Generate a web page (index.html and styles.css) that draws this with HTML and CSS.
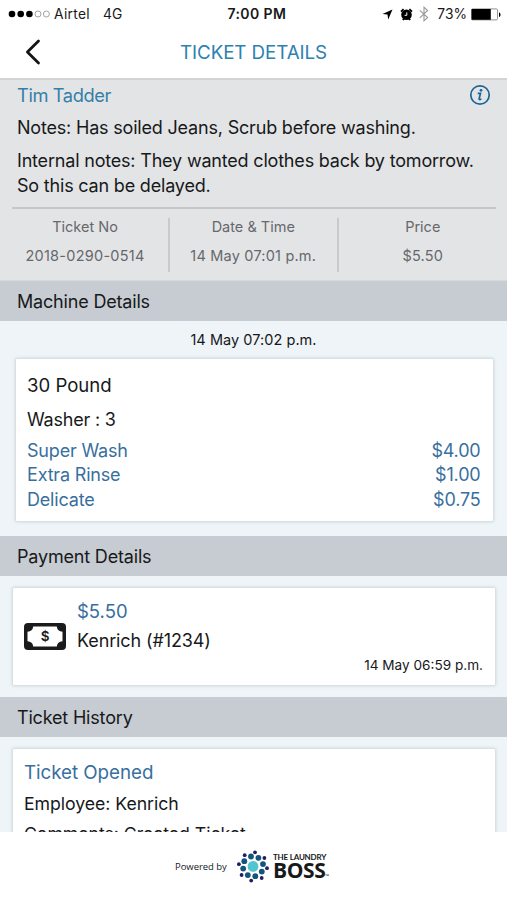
FILE: index.html
```html
<!DOCTYPE html>
<html lang="en">
<head>
<meta charset="utf-8">
<title>Ticket Details</title>
<link rel="stylesheet" href="styles.css">
</head>
<body>
<div class="phone">
  <div class="status">
    <div class="status-left">
      <svg class="signal" width="42" height="8" viewBox="0 0 42 8"><g fill="#000"><circle cx="4" cy="4" r="3.3"/><circle cx="12.7" cy="4" r="3.3"/><circle cx="21.4" cy="4" r="3.3"/></g><g fill="none" stroke="#999" stroke-width=".9"><circle cx="30" cy="4" r="3"/><circle cx="38.4" cy="4" r="3"/></g></svg>
      <span class="carrier">Airtel</span><span class="network">4G</span>
    </div>
    <span class="clock">7:00 PM</span>
    <div class="status-right">
      <svg class="loc" width="11" height="11" viewBox="0 0 11 11"><path d="M10.5.5 6.2 10.5 5.5 5.6.5 5z" fill="#000"/></svg>
      <svg class="alarm" width="13" height="13" viewBox="0 0 13 13"><circle cx="6.5" cy="6.8" r="5.3"/><path d="M1 3.6 3.6 1.2M12 3.6 9.4 1.2M2.9 12 4 10.6M10.1 12 9 10.6" stroke="#000" stroke-width="1.8"/><path d="M6.8 4.4v2.9H4.6" fill="none" stroke="#fff" stroke-width="1"/></svg>
      <svg class="bt" width="10" height="16" viewBox="0 0 10 16"><path d="m.8 4.3 7.8 7.2L5 14.8V1.2l3.6 3.3L.8 11.8" fill="none" stroke="#999" stroke-width="1.1"/></svg>
      <span class="percent">73%</span>
      <svg class="battery" width="30" height="13" viewBox="0 0 30 13"><rect x=".5" y=".9" width="26" height="11" rx="1.2" fill="#fff" stroke="#777" stroke-width=".8"/><path d="M.6 1h19.2v10.8H.6z"/><path d="M28 4.2c2 .7 2 4.1 0 4.8z"/></svg>
    </div>
  </div>
  <header class="nav">
    <svg class="back" width="16" height="26" viewBox="0 0 16 26"><path d="M13.5 2 2.4 13 13.5 24" fill="none" stroke="#151515" stroke-width="2.8" stroke-linecap="round" stroke-linejoin="round"/></svg>
    <h1 class="title">TICKET DETAILS</h1>
  </header>
  <main class="content">
    <section class="summary">
      <div class="customer">
        <span class="name">Tim Tadder</span>
        <svg class="info" width="22" height="22" viewBox="0 0 22 22"><circle cx="11" cy="11" r="9.2" fill="none" stroke="#1b6696" stroke-width="1.7"/><g fill="none" stroke="#1b6696" stroke-width="1.7"><path d="M8.7 9.3h2.8l-1.3 5.2q-.3 1.3 1 1l1.2-.5"/></g><circle cx="12" cy="6.3" r="1.4" fill="#1b6696"/></svg>
      </div>
      <p class="notes">Notes: Has soiled Jeans, Scrub before washing.</p>
      <p class="internal">Internal notes: They wanted clothes back by tomorrow.<br>So this can be delayed.</p>
      <div class="rule"></div>
      <div class="facts">
        <div class="fact"><span class="label">Ticket No</span><span class="value">2018-0290-0514</span></div>
        <div class="fact"><span class="label">Date &amp; Time</span><span class="value">14 May 07:01 p.m.</span></div>
        <div class="fact"><span class="label">Price</span><span class="value">$5.50</span></div>
      </div>
    </section>
    <h2 class="bar">Machine Details</h2>
    <div class="stamp">14 May 07:02 p.m.</div>
    <section class="card machine">
      <div class="size">30 Pound</div>
      <div class="washer">Washer : 3</div>
      <div class="option"><span>Super Wash</span><span>$4.00</span></div>
      <div class="option"><span>Extra Rinse</span><span>$1.00</span></div>
      <div class="option"><span>Delicate</span><span>$0.75</span></div>
    </section>
    <h2 class="bar">Payment Details</h2>
    <section class="card payment">
      <svg class="cash" width="42" height="27" viewBox="0 0 42 27"><rect width="42" height="27" rx="4" fill="#1b1b1b"/><path d="M9.2 3.5h23.6q.5 4.7 5.7 5.2v9.6q-5.2.5-5.7 5.2H9.2q-.5-4.7-5.7-5.2V8.7q5.2-.5 5.7-5.2z" fill="#fff"/><text class="dollar" x="21.2" y="18.4" text-anchor="middle">$</text></svg>
      <div class="pay-body">
        <div class="amount">$5.50</div>
        <div class="payer">Kenrich (#1234)</div>
        <div class="paid-at">14 May 06:59 p.m.</div>
      </div>
    </section>
    <h2 class="bar">Ticket History</h2>
    <section class="card history">
      <div class="event">Ticket Opened</div>
      <div class="line">Employee: Kenrich</div>
      <div class="line">Comments: Created Ticket</div>
    </section>
  </main>
  <footer class="footer">
    <span class="powered">Powered by</span>
    <svg class="logo" width="32" height="33" viewBox="0 0 32 33"><circle cx="16" cy="16.4" r="5.4" fill="#53c5cf"/><g fill="#14557f"><circle cx="14" cy="6.5" r="2.9"/><circle cx="21.4" cy="7.8" r="2.9"/><circle cx="26" cy="14.1" r="2.9"/><circle cx="24.8" cy="21.6" r="2.9"/><circle cx="18.3" cy="26.2" r="2.9"/><circle cx="10.8" cy="25.1" r="2.9"/><circle cx="6.2" cy="18.6" r="2.9"/><circle cx="7.3" cy="11.2" r="2.9"/></g><g fill="#211d60"><circle cx="18" cy="2.3" r="1.9"/><circle cx="27.4" cy="8" r="1.9"/><circle cx="30" cy="18.2" r="1.9"/><circle cx="24.7" cy="28" r="1.9"/><circle cx="14.2" cy="30.6" r="1.9"/><circle cx="4.6" cy="25" r="1.9"/><circle cx="1.9" cy="14.2" r="1.9"/><circle cx="7.7" cy="5.2" r="1.9"/></g></svg>
    <div class="wordmark"><span class="small">THE LAUNDRY</span><span class="big">BOSS<small>™</small></span></div>
  </footer>
</div>
</body>
</html>
```
FILE: styles.css
```css
* { box-sizing: border-box; }
body { margin: 0; background: #fff; font-family: Inter, "Liberation Sans", sans-serif; color: #17191b; }
h1, h2, p { margin: 0; font-weight: 400; }
svg { display: block; flex: none; }
.phone { width: 507px; height: 900px; display: flex; flex-direction: column; overflow: hidden; white-space: nowrap; }
.status { height: 28px; flex: none; display: grid; grid-template-columns: 219.5px 1fr auto; align-items: center; padding: 0 6px 0 8px; font-size: 13.8px; line-height: 28px; }
.status-left, .status-right { display: flex; align-items: center; }
.carrier { margin-left: 4px; font-size: 13.8px; letter-spacing: 0.3px; }
.network { margin-left: 13px; letter-spacing: 0.2px; }
.clock { font-weight: 600; font-size: 14px; letter-spacing: 0.4px; }
.alarm { margin-left: 7px; }
.bt { margin-left: 6px; }
.percent { margin: 0 4px 0 8px; }
.nav { height: 50px; flex: none; display: grid; grid-template-columns: 100px 1fr 100px; align-items: center; padding: 0; }
.back { margin: -3px 0 0 25px; }
.title { font-size: 18.8px; letter-spacing: -0.1px; line-height: 48px; text-align: center; color: #2d81ae; }
.content { height: 754px; flex: none; overflow: hidden; background: #eef4f8; }
.summary { height: 203px; background: #e3e4e6; border-top: 2px solid #d2d4d6; border-bottom: 1px solid #d5dadc; padding: 3px 11px 0 12px; }
.customer { display: flex; height: 24px; align-items: center; justify-content: space-between; padding: 0 5px; }
.name { font-size: 18.3px; letter-spacing: -0.4px; line-height: 24px; color: #347fa9; }
.notes, .internal { font-size: 18px; letter-spacing: -0.19px; line-height: 24.5px; padding-left: 5px; }
.notes { margin-top: 9px; }
.internal { margin-top: 8.5px; }
.rule { height: 2px; margin-top: 9px; background: #c5c7c9; }
.facts { display: grid; grid-template-columns: 168px 168.5px 1fr; margin: 9px -11px 0 -12px; }
.fact { height: 54px; display: flex; flex-direction: column; align-items: center; color: #66686b; font-size: 14.5px; letter-spacing: 0.2px; }
.fact + .fact { border-left: 2px solid #c8cacc; }
.label { line-height: 18px; letter-spacing: 0; }
.value { line-height: 20px; margin-top: 9.5px; }
.fact:first-child { padding-left: 2px; }
.fact:first-child .value { letter-spacing: 0.25px; }
.bar { height: 40px; background: #c7cbd2; padding-left: 17px; font-size: 18px; letter-spacing: -0.18px; line-height: 41px; }
.stamp { height: 38px; line-height: 38px; text-align: center; font-size: 14.5px; letter-spacing: 0.05px; }
.card { background: #fff; border-radius: 1px; box-shadow: 0 0 3px 1px #ccd5d5; }
.machine { margin: 0 14.5px 15px 15.5px; height: 162px; padding: 14px 12px 0 11.5px; }
.size { font-size: 18.6px; line-height: 24px; }
.washer { font-size: 18px; letter-spacing: -0.2px; line-height: 24px; margin: 11px 0 6.5px; }
.option { display: flex; justify-content: space-between; font-size: 18px; letter-spacing: -0.18px; line-height: 24.5px; color: #386f9e; }
.payment { margin: 12px 12px 12px 12.5px; height: 97px; display: flex; padding: 0 12px 0 11px; }
.cash { margin-top: 35px; }
.dollar { font: 600 13.5px Inter, sans-serif; fill: #1b1b1b; }
.pay-body { margin-left: 11.5px; flex: 1; }
.amount { margin-top: 11px; font-size: 18.5px; line-height: 24px; color: #386f9e; }
.payer { margin-top: 5.5px; font-size: 18px; letter-spacing: -0.12px; line-height: 24px; }
.paid-at { margin-top: 3.5px; text-align: right; font-size: 13.6px; line-height: 18px; }
.history { margin: 12px 12px 0 12.5px; height: 120px; padding: 11px 12px 11px 11.5px; }
.event { font-size: 18.8px; letter-spacing: -0.05px; line-height: 26px; color: #386f9e; }
.line { font-size: 17.7px; letter-spacing: -0.05px; line-height: 30px; margin-top: 3px; }
.line + .line { margin-top: 0; }
.footer { flex: 1; display: flex; align-items: center; padding-left: 175px; }
.powered { font: 9.5px "Open Sans", sans-serif; letter-spacing: -0.05px; width: 52px; margin-right: 10px; }
.wordmark { display: flex; flex-direction: column; margin-left: 4px; font-family: Lato, sans-serif; }
.small { font-size: 8px; font-weight: 700; line-height: 8px; letter-spacing: -0.2px; }
.big { display: flex; align-items: flex-end; font: 700 21px/19px "Open Sans", sans-serif; letter-spacing: -0.4px; }
.big small { font-size: 5px; line-height: 7px; }
```
